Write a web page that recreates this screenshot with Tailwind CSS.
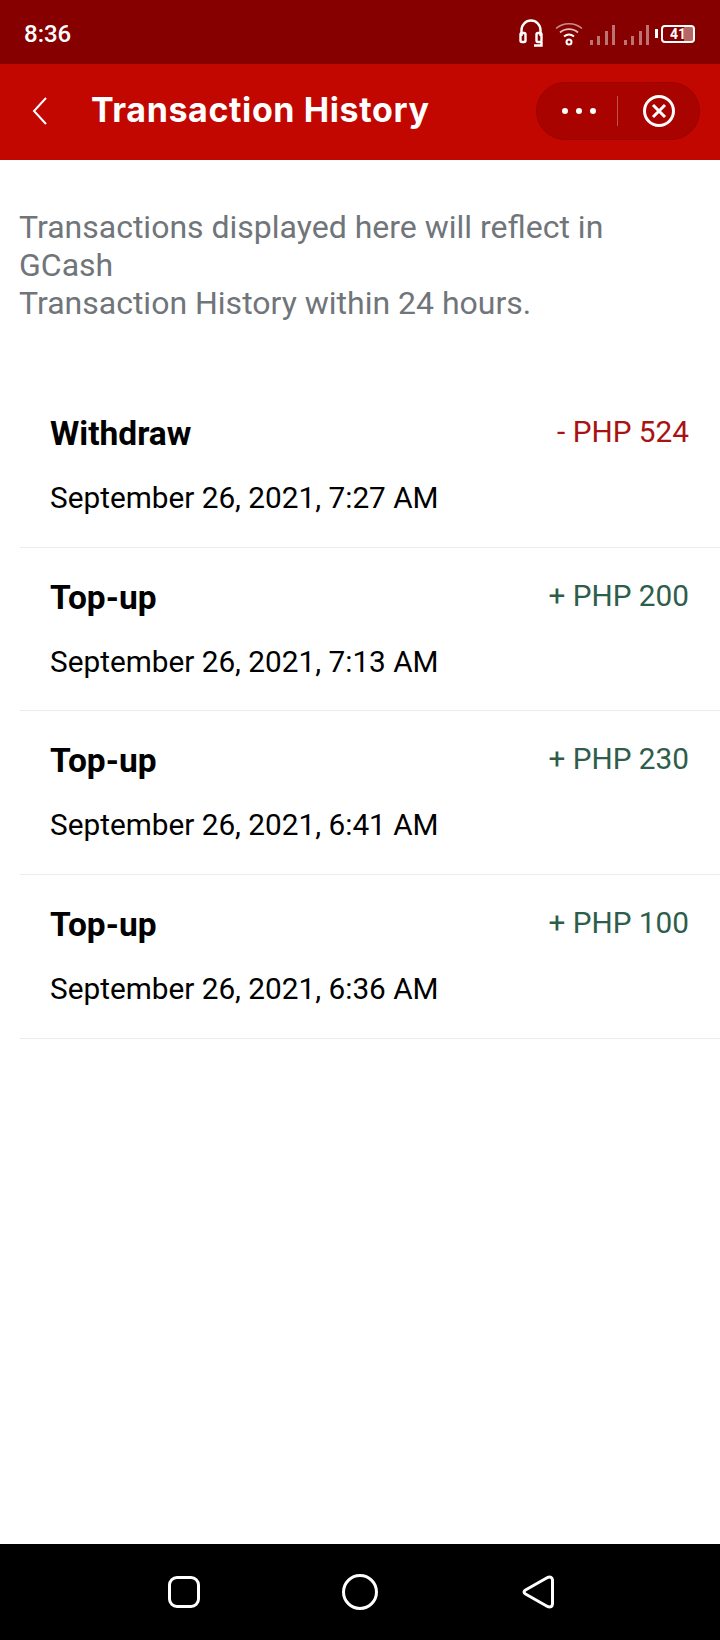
<!DOCTYPE html>
<html lang="en">
<head>
    <meta charset="UTF-8">
    <meta name="viewport" content="width=device-width, initial-scale=1.0">
    <title>Transaction History</title>
    <script src="https://cdn.jsdelivr.net/npm/@tailwindcss/browser@4"></script>
</head>
<body class="bg-white">
<div class="w-[720px] h-[1640px] flex flex-col font-['Roboto',sans-serif] overflow-hidden">
    <!-- Status bar -->
    <div class="h-16 shrink-0 bg-[#870000] flex items-center justify-between pl-6 pr-[25px] pt-[3px] text-white">
        <span class="text-[24px] font-medium leading-none">8:36</span>
        <div class="flex items-center">
            <svg width="24" height="30" viewBox="0 0 24 30" fill="none" stroke="white" stroke-width="2.4" class="mr-[12px]">
                <path d="M2.5 17V11a9.5 9.5 0 0 1 19 0v6"/>
                <rect x="1.5" y="14" width="5" height="9" rx="1.5"/>
                <rect x="17.5" y="14" width="5" height="9" rx="1.5"/>
                <path d="M15 26.5h7.5V23"/>
            </svg>
            <svg width="28" height="26" viewBox="0 0 28 26" fill="none" stroke="white" class="mr-[7px]">
                <path d="M1 7.5c7-6.500 19-6.500 26 0" stroke-width="1.500" opacity=".55"/>
                <path d="M5 11.500c5-4.500 13-4.500 18 0" stroke-width="1.800" opacity=".75"/>
                <path d="M9 15.500c3-2.500 7-2.500 10 0" stroke-width="2"/>
                <circle cx="14" cy="21" r="2.500" stroke-width="2"/>
            </svg>
            <div class="flex items-end gap-[4.33px] h-[22px] mr-[9px] opacity-45">
                <i class="w-[3px] h-[5px] bg-white"></i>
                <i class="w-[3px] h-[9px] bg-white"></i>
                <i class="w-[3px] h-[14px] bg-white"></i>
                <i class="w-[3px] h-[20px] bg-white"></i>
            </div>
            <div class="flex items-end gap-[4.33px] h-[22px] mr-[6px] opacity-45">
                <i class="w-[3px] h-[5px] bg-white"></i>
                <i class="w-[3px] h-[9px] bg-white"></i>
                <i class="w-[3px] h-[14px] bg-white"></i>
                <i class="w-[3px] h-[20px] bg-white"></i>
            </div>
            <div class="w-[3px] h-[9px] bg-white mr-[3px]"></div>
            <div class="relative w-[34px] h-[18px] border-2 border-white rounded-[4px] flex items-center justify-center overflow-hidden">
                <div class="absolute right-0 top-0 bottom-0 w-[9px] bg-white/40"></div>
                <span class="relative text-[14px] font-bold leading-none">41</span>
            </div>
        </div>
    </div>

    <!-- App bar -->
    <div class="h-24 shrink-0 bg-[#c20600] flex items-center pl-8 pr-5 pb-[2px] text-white">
        <svg width="16" height="28" viewBox="0 0 16 28" fill="none" stroke="white" stroke-width="2" class="mr-[43px]">
            <path d="M14 1 2 14l12 13"/>
        </svg>
        <h1 class="font-['Inter',sans-serif] text-[34px] font-bold leading-none tracking-[0.6px] flex-1 -mt-[2px]">Transaction History</h1>
        <div class="w-[164px] h-[58px] rounded-full bg-[#a90300] border border-[#9c0200] flex items-center">
            <div class="flex-1 flex justify-center gap-2 pl-1">
                <i class="w-[6px] h-[6px] rounded-full bg-white"></i>
                <i class="w-[6px] h-[6px] rounded-full bg-white"></i>
                <i class="w-[6px] h-[6px] rounded-full bg-white"></i>
            </div>
            <div class="w-px h-[30px] bg-white/30"></div>
            <div class="w-[81px] flex justify-center">
                <svg width="34" height="34" viewBox="0 0 34 34" fill="none" stroke="white" stroke-width="3">
                    <circle cx="17" cy="17" r="14.500"/>
                    <path d="m11 11 12 12M23 11 11 23"/>
                </svg>
            </div>
        </div>
    </div>

    <!-- Content -->
    <div class="flex-1 pt-[48px] pl-5">
        <p class="text-[32px] leading-[38px] text-[#70757a] -ml-px">Transactions displayed here will reflect in<br>GCash<br>Transaction History within 24 hours.</p>

        <div class="mt-[62px]">
            <div class="h-[164px] pl-[30px] pr-[31px] border-b border-[#ececec]">
                <div class="flex justify-between pt-[31px] h-[95px]">
                    <span class="text-[33.5px] font-bold leading-[38px] text-black">Withdraw</span>
                    <span class="text-[29.75px] leading-[38px] -mt-[2px] text-[#a91212]">- PHP 524</span>
                </div>
                <p class="text-[29.75px] leading-[38px] text-black">September 26, 2021, 7:27 AM</p>
            </div>
            <div class="h-[163px] pl-[30px] pr-[31px] border-b border-[#ececec]">
                <div class="flex justify-between pt-[31px] h-[95px]">
                    <span class="text-[33.5px] font-bold leading-[38px] text-black">Top-up</span>
                    <span class="text-[29.75px] leading-[38px] -mt-[2px] text-[#2f5d4b]">+ PHP 200</span>
                </div>
                <p class="text-[29.75px] leading-[38px] text-black">September 26, 2021, 7:13 AM</p>
            </div>
            <div class="h-[164px] pl-[30px] pr-[31px] border-b border-[#ececec]">
                <div class="flex justify-between pt-[31px] h-[95px]">
                    <span class="text-[33.5px] font-bold leading-[38px] text-black">Top-up</span>
                    <span class="text-[29.75px] leading-[38px] -mt-[2px] text-[#2f5d4b]">+ PHP 230</span>
                </div>
                <p class="text-[29.75px] leading-[38px] text-black">September 26, 2021, 6:41 AM</p>
            </div>
            <div class="h-[164px] pl-[30px] pr-[31px] border-b border-[#ececec]">
                <div class="flex justify-between pt-[31px] h-[95px]">
                    <span class="text-[33.5px] font-bold leading-[38px] text-black">Top-up</span>
                    <span class="text-[29.75px] leading-[38px] -mt-[2px] text-[#2f5d4b]">+ PHP 100</span>
                </div>
                <p class="text-[29.75px] leading-[38px] text-black">September 26, 2021, 6:36 AM</p>
            </div>
        </div>
    </div>

    <!-- Nav bar -->
    <div class="h-[96px] shrink-0 bg-black relative">
        <svg width="720" height="96" viewBox="0 0 720 96" fill="none" stroke="white" stroke-width="3" stroke-linejoin="round">
            <rect x="169.500" y="33.500" width="29" height="29" rx="7.500"/>
            <circle cx="360" cy="48" r="16.500"/>
            <path d="M547.500 33.500 525.500 46Q522.500 48 525.500 50L547.500 62.500Q552 64 552.500 60V36Q552 32 547.500 33.500Z"/>
        </svg>
    </div>
</div>
</body>
</html>
